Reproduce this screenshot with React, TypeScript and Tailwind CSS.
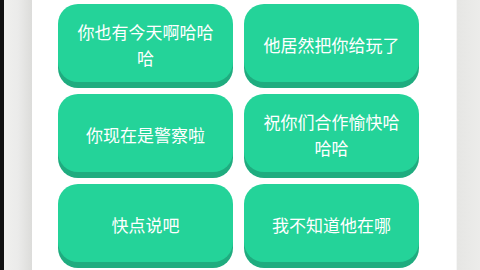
import React from "react";

const items = [
  "你也有今天啊哈哈哈",
  "他居然把你给玩了",
  "你现在是警察啦",
  "祝你们合作愉快哈哈哈",
  "快点说吧",
  "我不知道他在哪",
];

export default function App() {
  return (
    <div
      className="flex h-[270px] w-[480px] overflow-hidden bg-white"
      style={{ fontFamily: '"Noto Sans CJK SC", "Noto Sans", sans-serif' }}
    >
      <div className="w-[4px] shrink-0 bg-[#111111]" />
      <div className="w-[28px] shrink-0 bg-gradient-to-r from-[#f0f0ee] via-[#ebebea] to-[#dcdcda]" />
      <div className="flex-1 pl-[26px] pt-[4px]">
        <div className="grid grid-cols-[175px_175px] gap-x-[11px] gap-y-[12px]">
          {items.map((t) => (
            <div
              key={t}
              className="flex h-[78px] items-center justify-center rounded-[20px] bg-[#24d399] px-[14px] pt-[4px] text-center text-[17px] leading-[26px] text-white shadow-[0_6px_0_#1fac7f]"
            >
              {t}
            </div>
          ))}
        </div>
      </div>
      <div className="w-[24px] shrink-0 border-l border-[#f6f6f6] bg-gradient-to-r from-[#e6e6e4] to-[#ececea]" />
    </div>
  );
}
